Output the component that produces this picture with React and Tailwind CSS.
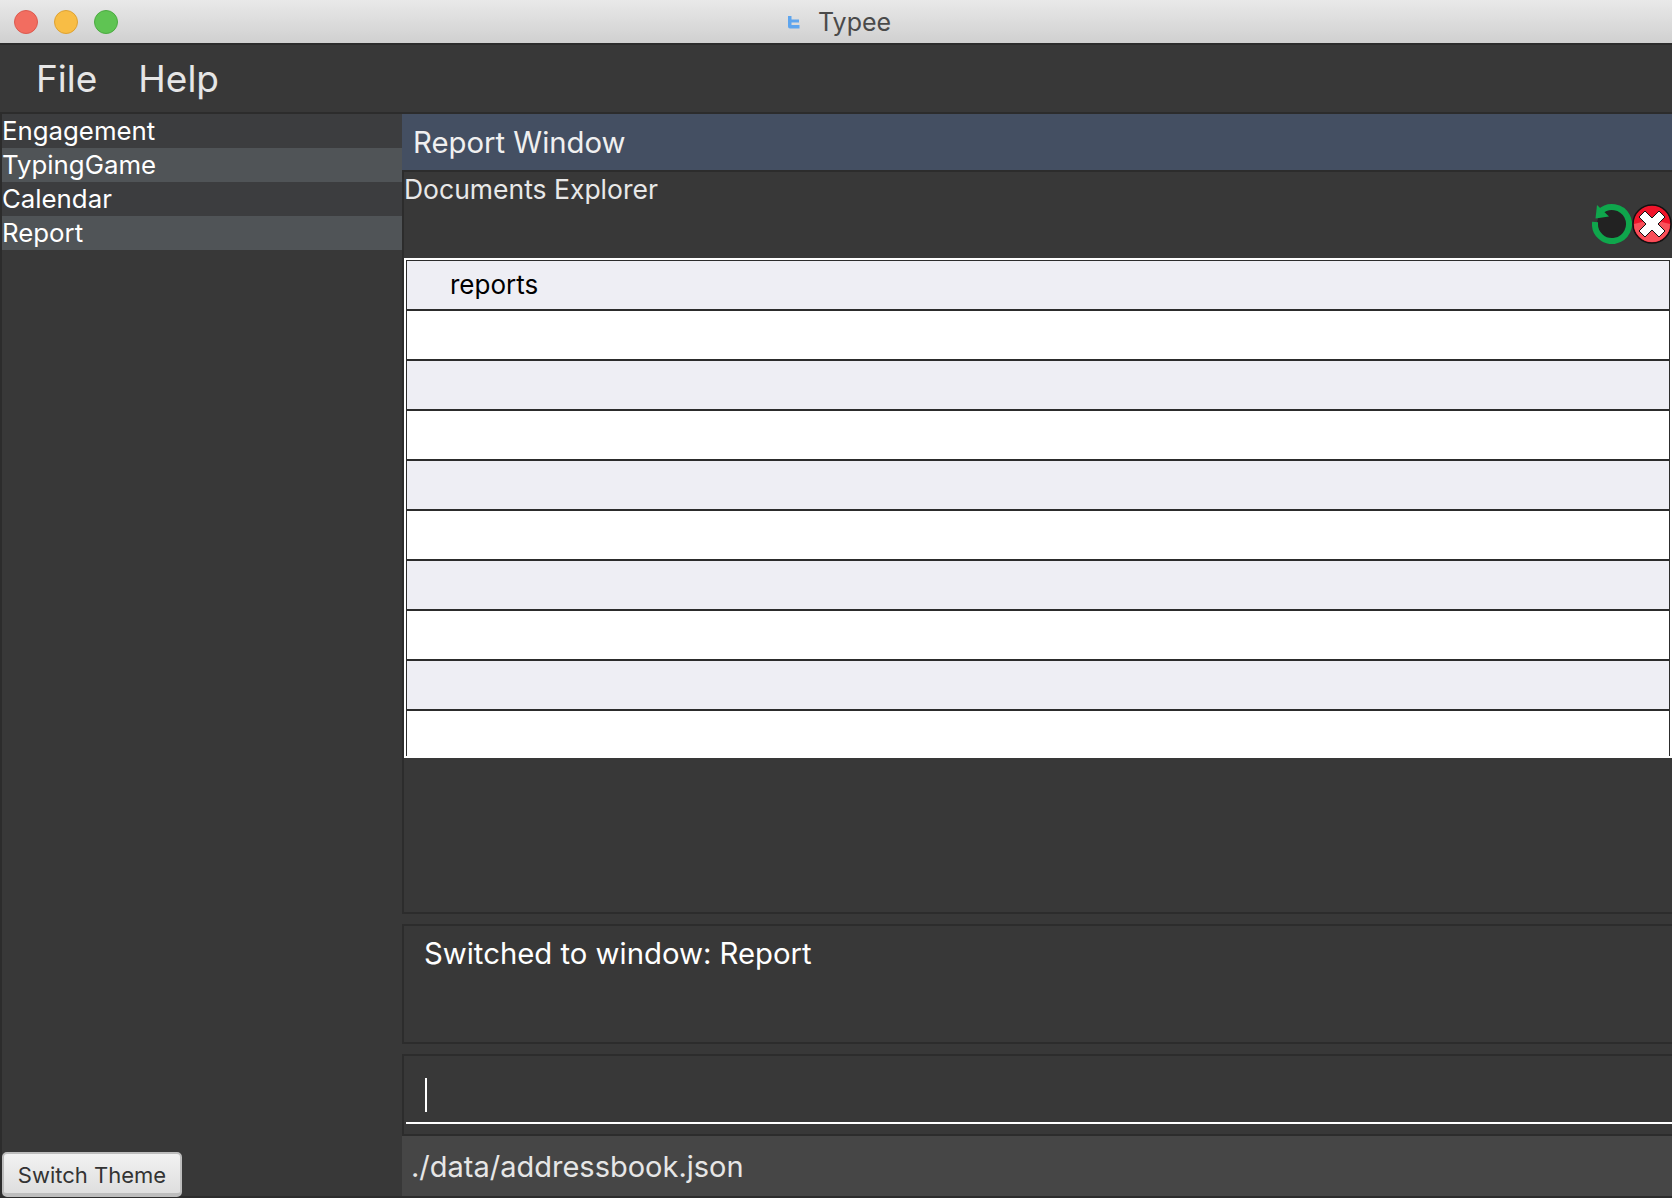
import React from 'react';

const font = "font-['Inter','Liberation_Sans',sans-serif]";

const navItems = [
  { label: 'Engagement', selected: false },
  { label: 'TypingGame', selected: true },
  { label: 'Calendar', selected: false },
  { label: 'Report', selected: true },
];

const rows = [0, 1, 2, 3, 4, 5, 6, 7, 8, 9];

function TrafficLight({ color, ring }) {
  return <span className={`h-6 w-6 rounded-full border ${color} ${ring}`} />;
}

function RefreshIcon() {
  return (
    <svg width="40" height="40" viewBox="0 0 40 40" className="shrink-0">
      <circle cx="20" cy="20" r="15" fill="#222222" />
      <path d="M8 8 A17 17 0 1 1 3.1 18" fill="none" stroke="#0fa64c" strokeWidth="6" />
      <path d="M5 1 L17 12.5 L3.5 14.5 Z" fill="#0fa64c" />
    </svg>
  );
}

function CloseIcon() {
  return (
    <svg width="40" height="40" viewBox="0 0 40 40" className="shrink-0">
      <circle cx="20" cy="20" r="19" fill="#f0142a" stroke="#111111" strokeWidth="1.5" />
      <path d="M2 20 A18 18 0 0 0 38 20 Q20 14 2 20 Z" fill="#f9505a" />
      <path d="M13 7 L20 14 L27 7 L33 13 L26 20 L33 27 L27 33 L20 26 L13 33 L7 27 L14 20 L7 13 Z" fill="#ffffff" stroke="#111111" strokeWidth="1" />
    </svg>
  );
}

export default function App() {
  return (
    <div className={`flex h-[1198px] w-[1672px] flex-col overflow-hidden bg-[#383838] ${font}`}>
      {/* Title bar */}
      <div className="relative flex h-[45px] shrink-0 items-center border-b-2 border-[#2c2c2c] bg-gradient-to-b from-[#e9e9e9] to-[#d0d0d0] pl-[14px]">
        <div className="flex gap-4">
          <TrafficLight color="bg-[#f26d60]" ring="border-[#dc5a4f]" />
          <TrafficLight color="bg-[#f8bd45]" ring="border-[#dea233]" />
          <TrafficLight color="bg-[#5fc453]" ring="border-[#4cab42]" />
        </div>
        <div className="absolute left-[788px] top-[1px] flex h-[43px] items-center gap-[18px]">
          <svg width="12" height="14" viewBox="0 0 12 14" className="-translate-y-[1px]">
            <path d="M0 1 H3.5 V4.5 H11 V7.5 H3.5 V10 H11.5 V13.5 H2 Q0 13.5 0 11.5 Z" fill="#5ea5ee" />
          </svg>
          <span className="text-[25px] leading-none text-[#4a4a4a]">Typee</span>
        </div>
      </div>

      {/* Menu bar */}
      <div className="flex h-[67px] shrink-0 items-center gap-[41px] pl-[36px] text-[37px] leading-none text-[#e6e6e6]">
        <span>File</span>
        <span>Help</span>
      </div>

      <div className="flex min-h-0 flex-1 border-y-2 border-[#2c2c2c]">
        {/* Sidebar */}
        <div className="flex w-[402px] shrink-0 flex-col justify-between border-l-2 border-[#2c2c2c]">
          <div className="flex flex-col">
            {navItems.map((item) => (
              <div
                key={item.label}
                className={`flex h-[34px] items-center text-[25.8px] leading-none text-white ${item.selected ? 'bg-[#505457]' : 'bg-[#3c3d3f]'}`}
              >
                {item.label}
              </div>
            ))}
          </div>
          <button className="-mb-px flex h-[45px] w-[180px] items-center justify-center rounded-[5px] border-2 border-b-4 border-[#bdbdbd] bg-gradient-to-b from-[#f2f2f2] to-[#dedede] pt-[2px] text-[22px] leading-none text-[#333333]">
            Switch Theme
          </button>
        </div>

        {/* Main column */}
        <div className="flex min-w-0 flex-1 flex-col">
          <div className="flex h-[56px] shrink-0 items-center bg-[#444f62] pl-[11px] pt-[2px] text-[29.3px] leading-none text-[#f0f0f0]">
            Report Window
          </div>

          <div className="flex h-[744px] shrink-0 flex-col border-y-2 border-l-2 border-[#2c2c2c]">
            <div className="relative h-[86px] shrink-0">
              <div className="pt-[2px] text-[26.5px] leading-[30px] text-[#e8e8e8]">Documents Explorer</div>
              <div className="absolute bottom-[14px] right-0 flex">
                <RefreshIcon />
                <CloseIcon />
              </div>
            </div>
            <div className="h-[500px] shrink-0 border-2 border-white bg-white">
              <div className="flex h-full flex-col overflow-hidden border-x border-t border-[#2c2c2c]">
                {rows.map((row) => (
                  <div
                    key={row}
                    className={`flex h-[50px] shrink-0 items-center border-b-2 border-[#2c2c2c] pl-[43px] text-[26px] leading-none text-black ${row % 2 === 0 ? 'bg-[#eeeef4]' : 'bg-white'}`}
                  >
                    {row === 0 ? 'reports' : ''}
                  </div>
                ))}
              </div>
            </div>
          </div>

          {/* Result display */}
          <div className="mt-[10px] h-[120px] shrink-0 border-y-2 border-l-2 border-[#2c2c2c] pl-[20px] pt-[11px] text-[29.3px] leading-[34px] text-white">
            Switched to window: Report
          </div>

          {/* Command box */}
          <div className="mt-[10px] flex h-[82px] shrink-0 flex-col justify-end border-y-2 border-l-2 border-[#2c2c2c] pb-[10px] pl-[2px]">
            <div className="h-[56px] border-b-2 border-white pl-[19px] pt-[10px]">
              <div className="h-[34px] w-[2px] bg-white" />
            </div>
          </div>

          {/* Status bar */}
          <div className="flex flex-1 items-center bg-[#464646] pl-[9px] text-[29px] leading-none text-[#e6e6e6]">
            ./data/addressbook.json
          </div>
        </div>
      </div>
    </div>
  );
}
